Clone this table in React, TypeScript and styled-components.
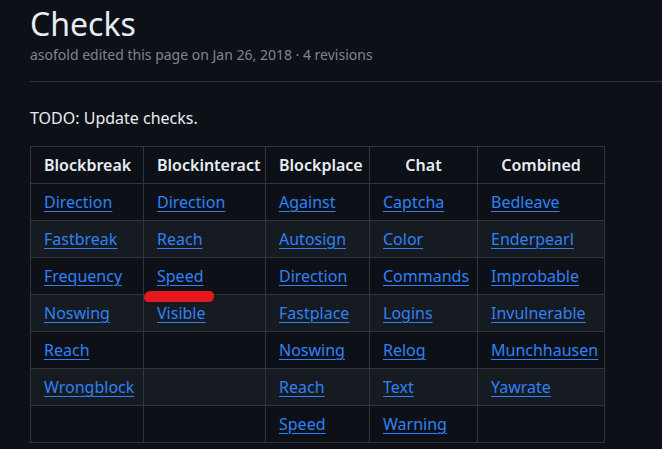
import React, { FC } from "react";
import styled, { createGlobalStyle } from "styled-components";

const colours = {
  bg: "#0d1117",
  stripe: "#161b22",
  border: "#30363d",
  text: "#e6edf3",
  muted: "#7d8590",
  link: "#2f81f7",
  marker: "#e3191f",
};

const GlobalStyle = createGlobalStyle`
  html, body {
    margin: 0;
    background: ${colours.bg};
  }
  body {
    font-family: "Noto Sans", "Open Sans", sans-serif;
    color: ${colours.text};
    font-size: 16px;
    line-height: 1.5;
  }
`;

const Page = styled.div`
  padding: 4px 0 0 30px;
  min-height: 449px;
  box-sizing: border-box;
  overflow: hidden;
`;

const Header = styled.div`
  border-bottom: 1px solid ${colours.border};
  padding-bottom: 16px;
  margin-bottom: 24px;
`;

const Title = styled.h1`
  margin: 0;
  font-size: 32px;
  font-weight: 400;
  line-height: 40px;
`;

const Meta = styled.div`
  font-size: 14px;
  color: ${colours.muted};
  line-height: 21px;
`;

const Paragraph = styled.p`
  margin: 0 0 16px;
`;

const Table = styled.table`
  border-collapse: collapse;
  table-layout: fixed;
  width: 574px;
`;

const Th = styled.th`
  border: 1px solid ${colours.border};
  padding: 6px 13px;
  font-weight: 600;
  text-align: center;
  white-space: nowrap;
`;

const Row = styled.tr<{ $striped: boolean }>`
  background: ${(p) => (p.$striped ? colours.stripe : colours.bg)};
`;

const Td = styled.td`
  border: 1px solid ${colours.border};
  padding: 6px 13px;
  height: 24px;
  white-space: nowrap;
  position: relative;
`;

const Link = styled.a`
  color: ${colours.link};
  text-decoration: underline;
  text-underline-offset: 3px;
  text-decoration-thickness: 1px;
`;

// red pen stroke someone drew under "Speed"
const Marker = styled.span`
  position: absolute;
  left: 0;
  bottom: -8px;
  width: 70px;
  height: 11px;
  border-radius: 7px 5px 6px 5px;
  background: ${colours.marker};
  z-index: 2;
`;

const columns = [
  { name: "Blockbreak", width: 113, items: ["Direction", "Fastbreak", "Frequency", "Noswing", "Reach", "Wrongblock"] },
  { name: "Blockinteract", width: 122, items: ["Direction", "Reach", "Speed", "Visible"] },
  { name: "Blockplace", width: 104, items: ["Against", "Autosign", "Direction", "Fastplace", "Noswing", "Reach", "Speed"] },
  { name: "Chat", width: 108, items: ["Captcha", "Color", "Commands", "Logins", "Relog", "Text", "Warning"] },
  { name: "Combined", width: 127, items: ["Bedleave", "Enderpearl", "Improbable", "Invulnerable", "Munchhausen", "Yawrate"] },
];

const rowCount = 7;

const App: FC = () => {
  return (
    <>
      <GlobalStyle />
      <Page>
        <Header>
          <Title>Checks</Title>
          <Meta>asofold edited this page on Jan 26, 2018 · 4 revisions</Meta>
        </Header>
        <Paragraph>TODO: Update checks.</Paragraph>
        <Table>
          <colgroup>
            {columns.map((c) => (
              <col key={c.name} style={{ width: c.width }} />
            ))}
          </colgroup>
          <thead>
            <tr>
              {columns.map((c) => (
                <Th key={c.name}>{c.name}</Th>
              ))}
            </tr>
          </thead>
          <tbody>
            {Array.from({ length: rowCount }).map((_, r) => (
              <Row key={r} $striped={r % 2 === 1}>
                {columns.map((c, ci) => {
                  const item = c.items[r];
                  return (
                    <Td key={c.name}>
                      {item && <Link href="#">{item}</Link>}
                      {ci === 1 && r === 2 && <Marker />}
                    </Td>
                  );
                })}
              </Row>
            ))}
          </tbody>
        </Table>
      </Page>
    </>
  );
};

export default App;
